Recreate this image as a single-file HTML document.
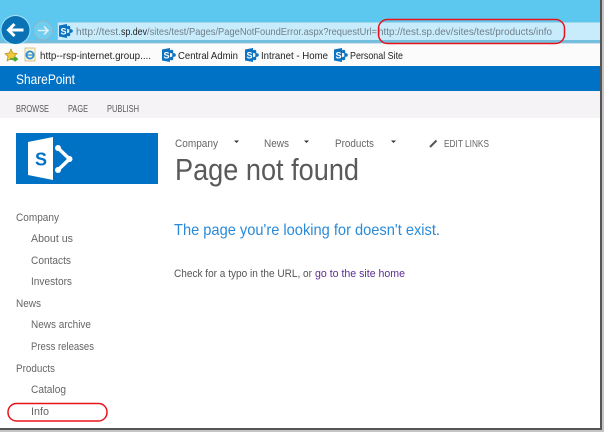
<!DOCTYPE html>
<html><head><meta charset="utf-8"><style>
html,body{margin:0;padding:0;background:#fff;width:604px;height:432px;overflow:hidden}
svg{display:block;filter:blur(.35px)}
text{font-family:"Liberation Sans",sans-serif;white-space:pre}
</style></head><body>
<svg width="604" height="432" viewBox="0 0 604 432" xmlns="http://www.w3.org/2000/svg">
<defs>
<g id="sp">
<polygon points="0,1.5 8,0 8,14 0,12.5" fill="#0c72c0"/>
<circle cx="9.5" cy="3.500" r="1.800" fill="#0c72c0"/><circle cx="12" cy="7" r="1.800" fill="#0c72c0"/><circle cx="9.500" cy="10.500" r="1.800" fill="#0c72c0"/>
<path d="M9.500 3.500L12 7L9.500 10.500" stroke="#0c72c0" stroke-width="1.400" fill="none"/>
<text x="1.500" y="10.500" font-size="9" font-weight="bold" fill="#fff">S</text>
</g>
</defs>
<rect width="604" height="432" fill="#fff"/>
<!-- browser chrome -->
<rect width="600" height="44" fill="#5cc8f0"/>
<rect x="57" y="22" width="543" height="18" fill="#c9ecfd"/>
<rect x="57" y="22" width="543" height="1" fill="#9fd6ec"/>
<rect x="0" y="40" width="600" height="4" fill="#74bfdd"/>
<rect x="0" y="43" width="600" height="1" fill="#cfe3ec"/>
<rect x="57" y="22" width="1" height="18" fill="#8fc4dc"/>
<circle cx="15.500" cy="30" r="15" fill="#a8dff5"/>
<circle cx="15.500" cy="30" r="14" fill="#0a72b4"/>
<path d="M8.500 30H23.500M14.500 24L8.500 30L14.500 36" stroke="#fff" stroke-width="3" fill="none"/>
<circle cx="43" cy="30.500" r="9.500" fill="#6fcdf0" stroke="#8fb4c6" stroke-width="1"/>
<path d="M38 30.500H48M44 26.500L48 30.500L44 34.500" stroke="#dff0f7" stroke-width="1.600" fill="none"/>
<use href="#sp" x="59" y="24"/>
<text x="76" y="35" font-size="10.500" fill="#6f7f87" textLength="45" lengthAdjust="spacingAndGlyphs">http://test.</text>
<text x="121" y="35" font-size="10.500" fill="#222" textLength="26" lengthAdjust="spacingAndGlyphs">sp.dev</text>
<text x="147" y="35" font-size="10.500" fill="#6f7f87" textLength="230" lengthAdjust="spacingAndGlyphs">/sites/test/Pages/PageNotFoundError.aspx?requestUrl=</text>
<text x="378" y="35" font-size="10.500" fill="#6f7f87" textLength="174" lengthAdjust="spacingAndGlyphs">http://test.sp.dev/sites/test/products/info</text>
<!-- favorites -->
<rect x="0" y="44" width="600" height="22" fill="#fbfbfb"/>
<polygon points="11,49 12.800,53 17,53.500 14,56.500 15,61 11,58.800 7,61 8,56.500 5,53.500 9.200,53" fill="#f2c83c" stroke="#b48f22" stroke-width=".7"/>
<path d="M10 59H17M14.500 57L17 59L14.500 61" stroke="#4da82e" stroke-width="1.800" fill="none"/>
<rect x="25" y="48" width="10" height="13" fill="#fdf3cf" stroke="#c8b98a" stroke-width=".8"/>
<circle cx="30" cy="55" r="3.600" fill="none" stroke="#2a8fd8" stroke-width="1.800"/>
<path d="M26.500 55H33.500" stroke="#2a8fd8" stroke-width="1.200"/>
<text x="40" y="59" font-size="10.500" fill="#222" textLength="111" lengthAdjust="spacingAndGlyphs">http--rsp-internet.group....</text>
<use href="#sp" x="162" y="48"/>
<text x="178" y="59" font-size="10.500" fill="#222" textLength="60" lengthAdjust="spacingAndGlyphs">Central Admin</text>
<use href="#sp" x="245" y="48"/>
<text x="261" y="59" font-size="10.500" fill="#222" textLength="67" lengthAdjust="spacingAndGlyphs">Intranet - Home</text>
<use href="#sp" x="334" y="48"/>
<text x="350" y="59" font-size="10.500" fill="#222" textLength="53" lengthAdjust="spacingAndGlyphs">Personal Site</text>
<!-- suite bar -->
<rect x="0" y="66" width="600" height="25" fill="#0072c6"/>
<text x="16" y="84" font-size="14" fill="#fff" textLength="59" lengthAdjust="spacingAndGlyphs">SharePoint</text>
<rect x="0" y="91" width="600" height="27" fill="#f6f3f7"/>
<text x="16" y="112" font-size="10" fill="#5a5a5a" textLength="33" lengthAdjust="spacingAndGlyphs">BROWSE</text>
<text x="68" y="112" font-size="10" fill="#5a5a5a" textLength="20" lengthAdjust="spacingAndGlyphs">PAGE</text>
<text x="107" y="112" font-size="10" fill="#5a5a5a" textLength="32" lengthAdjust="spacingAndGlyphs">PUBLISH</text>
<!-- logo -->
<rect x="16" y="133" width="142" height="51" fill="#0072c6"/>
<polygon points="28,142 53,137 53,180 28,175" fill="#fff"/>
<text x="35" y="165.500" font-size="18" font-weight="bold" fill="#0072c6">S</text>
<path d="M58 148L69.500 159L58 170" stroke="#fff" stroke-width="3.500" fill="none"/>
<circle cx="58" cy="148" r="3" fill="#fff"/><circle cx="69.500" cy="159" r="3" fill="#fff"/><circle cx="58" cy="170" r="3" fill="#fff"/>
<!-- top nav -->
<text x="175" y="147" font-size="11" fill="#666" textLength="43" lengthAdjust="spacingAndGlyphs">Company</text>
<polygon points="234,140.500 239,140.500 236.500,143" fill="#333"/>
<text x="264" y="147" font-size="11" fill="#666" textLength="25" lengthAdjust="spacingAndGlyphs">News</text>
<polygon points="304,140.500 309,140.500 306.500,143" fill="#333"/>
<text x="335" y="147" font-size="11" fill="#666" textLength="39" lengthAdjust="spacingAndGlyphs">Products</text>
<polygon points="391,140.500 396,140.500 393.500,143" fill="#333"/>
<path d="M430 147L436.500 140.500" stroke="#555" stroke-width="2"/>
<text x="444" y="147" font-size="10.500" fill="#666" textLength="45" lengthAdjust="spacingAndGlyphs">EDIT LINKS</text>
<text x="175" y="180" font-size="31" fill="#5a5a5a" textLength="184" lengthAdjust="spacingAndGlyphs">Page not found</text>
<text x="174" y="235" font-size="16" fill="#2a8ad8" textLength="266" lengthAdjust="spacingAndGlyphs">The page you're looking for doesn't exist.</text>
<text x="174" y="277" font-size="11" fill="#555" textLength="138" lengthAdjust="spacingAndGlyphs">Check for a typo in the URL, or</text>
<text x="315" y="277" font-size="11" fill="#5c2d91" textLength="90" lengthAdjust="spacingAndGlyphs">go to the site home</text>
<!-- left nav -->
<g font-size="11" fill="#666">
<text x="16" y="221" textLength="43" lengthAdjust="spacingAndGlyphs">Company</text>
<text x="31" y="242" textLength="42" lengthAdjust="spacingAndGlyphs">About us</text>
<text x="31" y="264" textLength="40" lengthAdjust="spacingAndGlyphs">Contacts</text>
<text x="31" y="285" textLength="41" lengthAdjust="spacingAndGlyphs">Investors</text>
<text x="16" y="307" textLength="25" lengthAdjust="spacingAndGlyphs">News</text>
<text x="31" y="328" textLength="60" lengthAdjust="spacingAndGlyphs">News archive</text>
<text x="31" y="350" textLength="63" lengthAdjust="spacingAndGlyphs">Press releases</text>
<text x="16" y="372" textLength="39" lengthAdjust="spacingAndGlyphs">Products</text>
<text x="31" y="393" textLength="35" lengthAdjust="spacingAndGlyphs">Catalog</text>
<text x="31" y="415" textLength="18" lengthAdjust="spacingAndGlyphs">Info</text>
</g>
<!-- annotations -->
<rect x="378.500" y="19.500" width="186" height="24" rx="9" fill="none" stroke="#e8141c" stroke-width="1.500"/>
<rect x="8" y="403.500" width="99" height="17.500" rx="8.500" fill="none" stroke="#e8141c" stroke-width="1.500"/>
<!-- screenshot shadow -->
<rect x="600" y="0" width="2" height="430" fill="#555"/>
<rect x="602" y="0" width="2" height="432" fill="#c4c4c4"/>
<rect x="0" y="428" width="602" height="2" fill="#555"/>
<rect x="0" y="430" width="604" height="2" fill="#c4c4c4"/>
</svg>
</body></html>
